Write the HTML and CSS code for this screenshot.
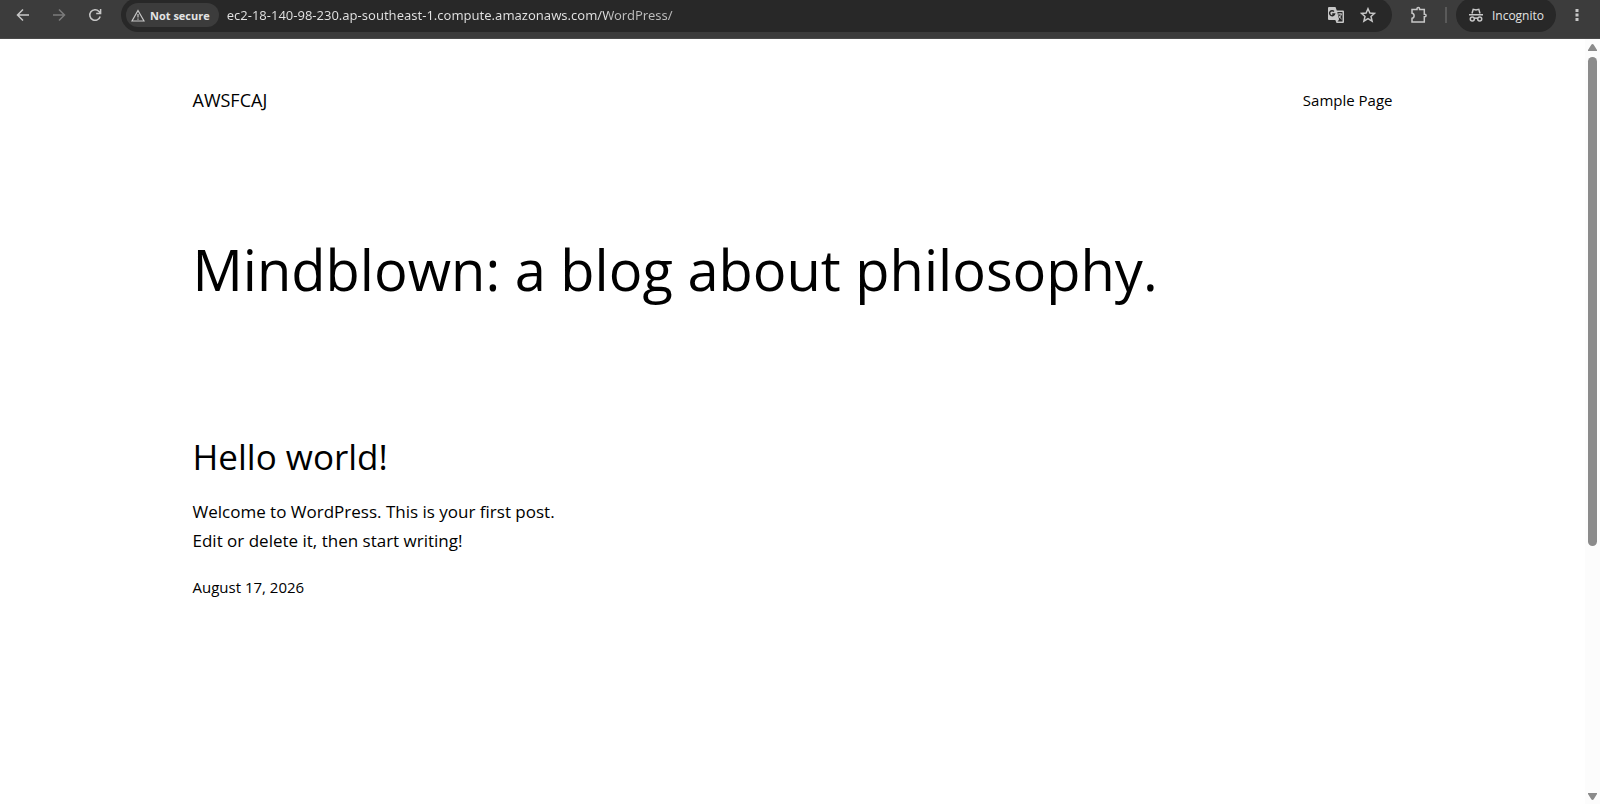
FILE: index.html
```html
<!DOCTYPE html>
<html lang="en">
<head>
    <meta charset="UTF-8">
    <title>AWSFCAJ</title>
    <link rel="stylesheet" href="styles.css">
</head>

<body>

    <!-- browser toolbar -->
    <div class="toolbar">
        <div class="toolbar-row">
            <button class="icon-btn" type="button" aria-label="Back">
                <svg width="14" height="14" viewBox="0 0 14 14"><path d="M13 7H2M7 1.5L1.5 7L7 12.5"/></svg>
            </button>
            <button class="icon-btn" type="button" aria-label="Forward" disabled>
                <svg width="14" height="14" viewBox="0 0 14 14"><path d="M1 7h11M7 1.5L12.5 7L7 12.5"/></svg>
            </button>
            <button class="icon-btn" type="button" aria-label="Reload">
                <svg width="14" height="14" viewBox="0 0 14 14"><path d="M12.2 8.5A5.3 5.3 0 1 1 11 3.4L12.3 5M12.6 1v4.4H8.2"/></svg>
            </button>

            <form class="omnibox">
                <button class="chip" type="button">
                    <svg width="14" height="13" viewBox="0 0 14 13"><path d="M7 1.5L13 12H1ZM7 5v3.5M7 9.4v1.3"/></svg>
                    Not secure
                </button>
                <input class="url" type="text" aria-label="Address" value="ec2-18-140-98-230.ap-southeast-1.compute.amazonaws.com/WordPress/">
                <button class="icon-btn small" type="button" aria-label="Translate">
                    <svg width="18" height="18" viewBox="0 0 18 18">
                        <path class="solid" d="M2 1h6.500l1.300 3.500H16a1 1 0 0 1 1 1V16a1 1 0 0 1-1 1H9.500l-1.200-3H2a1 1 0 0 1-1-1V2a1 1 0 0 1 1-1Z"/>
                        <path class="cut" d="M10.300 6H15.500V15.600H10.500L12 13.800Z"/>
                        <path class="dark" d="M7 5.500A2.500 2.500 0 1 0 7.500 8H5.200"/>
                        <path class="thin" d="M11 8h4M13 7v1M14.300 8c-.4 2-1.500 3.500-3 4.500M11.800 9.500c.6 1.500 1.500 2.600 2.800 3.600"/>
                    </svg>
                </button>
                <button class="icon-btn small" type="button" aria-label="Bookmark this page">
                    <svg width="16" height="16" viewBox="0 0 16 16"><path d="M8 1.700L9.900 6l4.600.4L11 9.500l1.100 4.600L8 11.700l-4.100 2.400L5 9.500L1.500 6.400L6.100 6Z"/></svg>
                </button>
            </form>

            <button class="icon-btn ext" type="button" aria-label="Extensions">
                <svg width="18" height="18" viewBox="0 0 18 18"><path d="M2 3.500h5V2.800a1.300 1.300 0 0 1 2.600 0v.7H14.300v4.700h.5a1.300 1.300 0 0 1 0 2.600H14.300V16H2v-3.700c2.800-.4 2.800-4.700 0-5.100Z"/></svg>
            </button>
            <span class="divider"></span>
            <button class="incognito" type="button">
                <svg width="16" height="14" viewBox="0 0 16 14">
                    <path d="M4 5.500L5.200 1.300L8 2l2.800-.7L12 5.500M1 6.700h14M6.300 10.500q1.700-1 3.400 0"/>
                    <circle cx="4.300" cy="11" r="2"/>
                    <circle cx="11.700" cy="11" r="2"/>
                </svg>
                Incognito
            </button>
            <button class="icon-btn menu" type="button" aria-label="Menu">
                <svg width="4" height="14" viewBox="0 0 4 14"><path class="solid" d="M.5 1h3v3h-3ZM.5 5.500h3v3h-3ZM.5 10h3v3h-3Z"/></svg>
            </button>
        </div>
    </div>

    <div class="viewport">
        <div class="page">
            <header class="site-header">
                <a class="site-title" href="#">AWSFCAJ</a>
                <nav><a class="nav-link" href="#">Sample Page</a></nav>
            </header>

            <main>
                <h1 class="headline">Mindblown: a blog about philosophy.</h1>

                <!-- post list -->
                <article class="post">
                    <h2 class="post-title"><a href="#">Hello world!</a></h2>
                    <p class="excerpt">Welcome to WordPress. This is your first post. Edit or delete it, then start writing!</p>
                    <a class="post-date" href="#"><time datetime="2026-08-17">August 17, 2026</time></a>
                </article>
            </main>
        </div>

        <div class="scrollbar">
            <svg width="9" height="7" viewBox="0 0 9 7"><path d="M4.500 0Q5.200 0 5.700 .8L9 6V7H0V6L3.300 .8Q3.800 0 4.500 0Z"/></svg>
            <div class="track"><div class="thumb"></div></div>
            <svg width="9" height="7" viewBox="0 0 9 7"><path d="M4.500 7Q5.200 7 5.700 6.200L9 1V0H0V1L3.300 6.200Q3.800 7 4.500 7Z"/></svg>
        </div>
    </div>

</body>
</html>
```
FILE: styles.css
```css
* {
    box-sizing: border-box;
}

body {
    margin: 0;
    height: 100vh;
    display: flex;
    flex-direction: column;
    overflow: hidden;
    background-color: #fff;
    color: #000;
    font-family: "Segoe UI", "Open Sans", "Noto Sans", sans-serif;
}

a {
    color: inherit;
    text-decoration: none;
}

button {
    margin: 0;
    padding: 0;
    border: 0;
    background: none;
    color: #e3e3e3;
    font-family: inherit;
    font-size: 12px;
}

/* toolbar */
.toolbar {
    flex: none;
    height: 39px;
    overflow: hidden;
    background-color: #3c3c3c;
    border-bottom: 1px solid #4a4a4a;
}

.toolbar-row {
    display: flex;
    align-items: center;
    height: 34px;
    margin-top: -2px;
    padding: 0 5px;
}

.toolbar svg {
    display: block;
    fill: none;
    stroke: #c7c7c7;
    stroke-width: 1.5;
}

.toolbar .solid {
    fill: #c7c7c7;
    stroke: none;
}

.toolbar .cut {
    fill: #282828;
    stroke: none;
}

.toolbar .dark {
    stroke: #282828;
}

.toolbar .thin {
    stroke-width: 1;
}

.icon-btn {
    display: flex;
    flex: none;
    align-items: center;
    justify-content: center;
    width: 36px;
    height: 34px;
}

.icon-btn:disabled {
    opacity: 0.45;
}

.icon-btn.small {
    width: 32px;
}

.omnibox {
    display: flex;
    flex: 1;
    align-items: center;
    height: 34px;
    margin-left: 8px;
    padding: 0 8px 0 5px;
    border-radius: 17px;
    background-color: #282828;
}

.chip {
    display: flex;
    flex: none;
    align-items: center;
    gap: 5px;
    height: 24px;
    padding: 0 9px 0 5px;
    border-radius: 12px;
    background-color: #3c3c3c;
    font-size: 11px;
    font-weight: 700;
}

.chip svg {
    stroke-width: 1.2;
}

/* host is brighter than the path after it */
.url {
    flex: 1;
    min-width: 0;
    margin-left: 8px;
    padding: 0;
    border: 0;
    outline: 0;
    background: linear-gradient(to right, #e3e3e3 381px, #bdbdbd 381px);
    -webkit-background-clip: text;
    background-clip: text;
    color: transparent;
    font-family: "Segoe UI", "Noto Sans", sans-serif;
    font-size: 13px;
}

.ext {
    margin-left: 9px;
}

.divider {
    width: 2px;
    height: 16px;
    margin: 0 9px 0 8px;
    background-color: #5a5a5a;
}

.incognito {
    display: flex;
    flex: none;
    align-items: center;
    gap: 8px;
    height: 34px;
    padding: 0 12px;
    border-radius: 17px;
    background-color: #282828;
}

.menu {
    margin-left: 3px;
}

/* page */
.viewport {
    display: flex;
    flex: 1;
    min-height: 0;
}

.page {
    flex: 1;
    padding: 0 48px;
}

.site-header,
main {
    max-width: 1200px;
    margin: 0 auto;
}

.site-header {
    display: flex;
    align-items: center;
    justify-content: space-between;
    padding-top: 46px;
    line-height: 30px;
}

.site-title {
    font-size: 18px;
}

.nav-link {
    font-size: 15px;
}

.headline {
    margin: 122px 0 0;
    font-size: 56px;
    font-weight: 400;
    line-height: 64px;
}

.post {
    max-width: 380px;
    margin-top: 134px;
}

.post-title {
    margin: 0;
    font-size: 35px;
    font-weight: 400;
    line-height: 44px;
}

.excerpt {
    margin: 18px 0 0;
    font-size: 17px;
    line-height: 29px;
}

.post-date {
    display: block;
    margin-top: 20px;
    font-size: 15px;
    line-height: 24px;
}

/* scrollbar */
.scrollbar {
    display: flex;
    flex: none;
    flex-direction: column;
    align-items: center;
    gap: 6px;
    width: 15px;
    padding: 5px 3px 4px;
    background-color: #fcfcfc;
}

.scrollbar svg {
    flex: none;
    fill: #8b8b8b;
}

.track {
    flex: 1;
    width: 9px;
}

.thumb {
    height: 67%;
    border-radius: 5px;
    background-color: #8b8b8b;
}
```
